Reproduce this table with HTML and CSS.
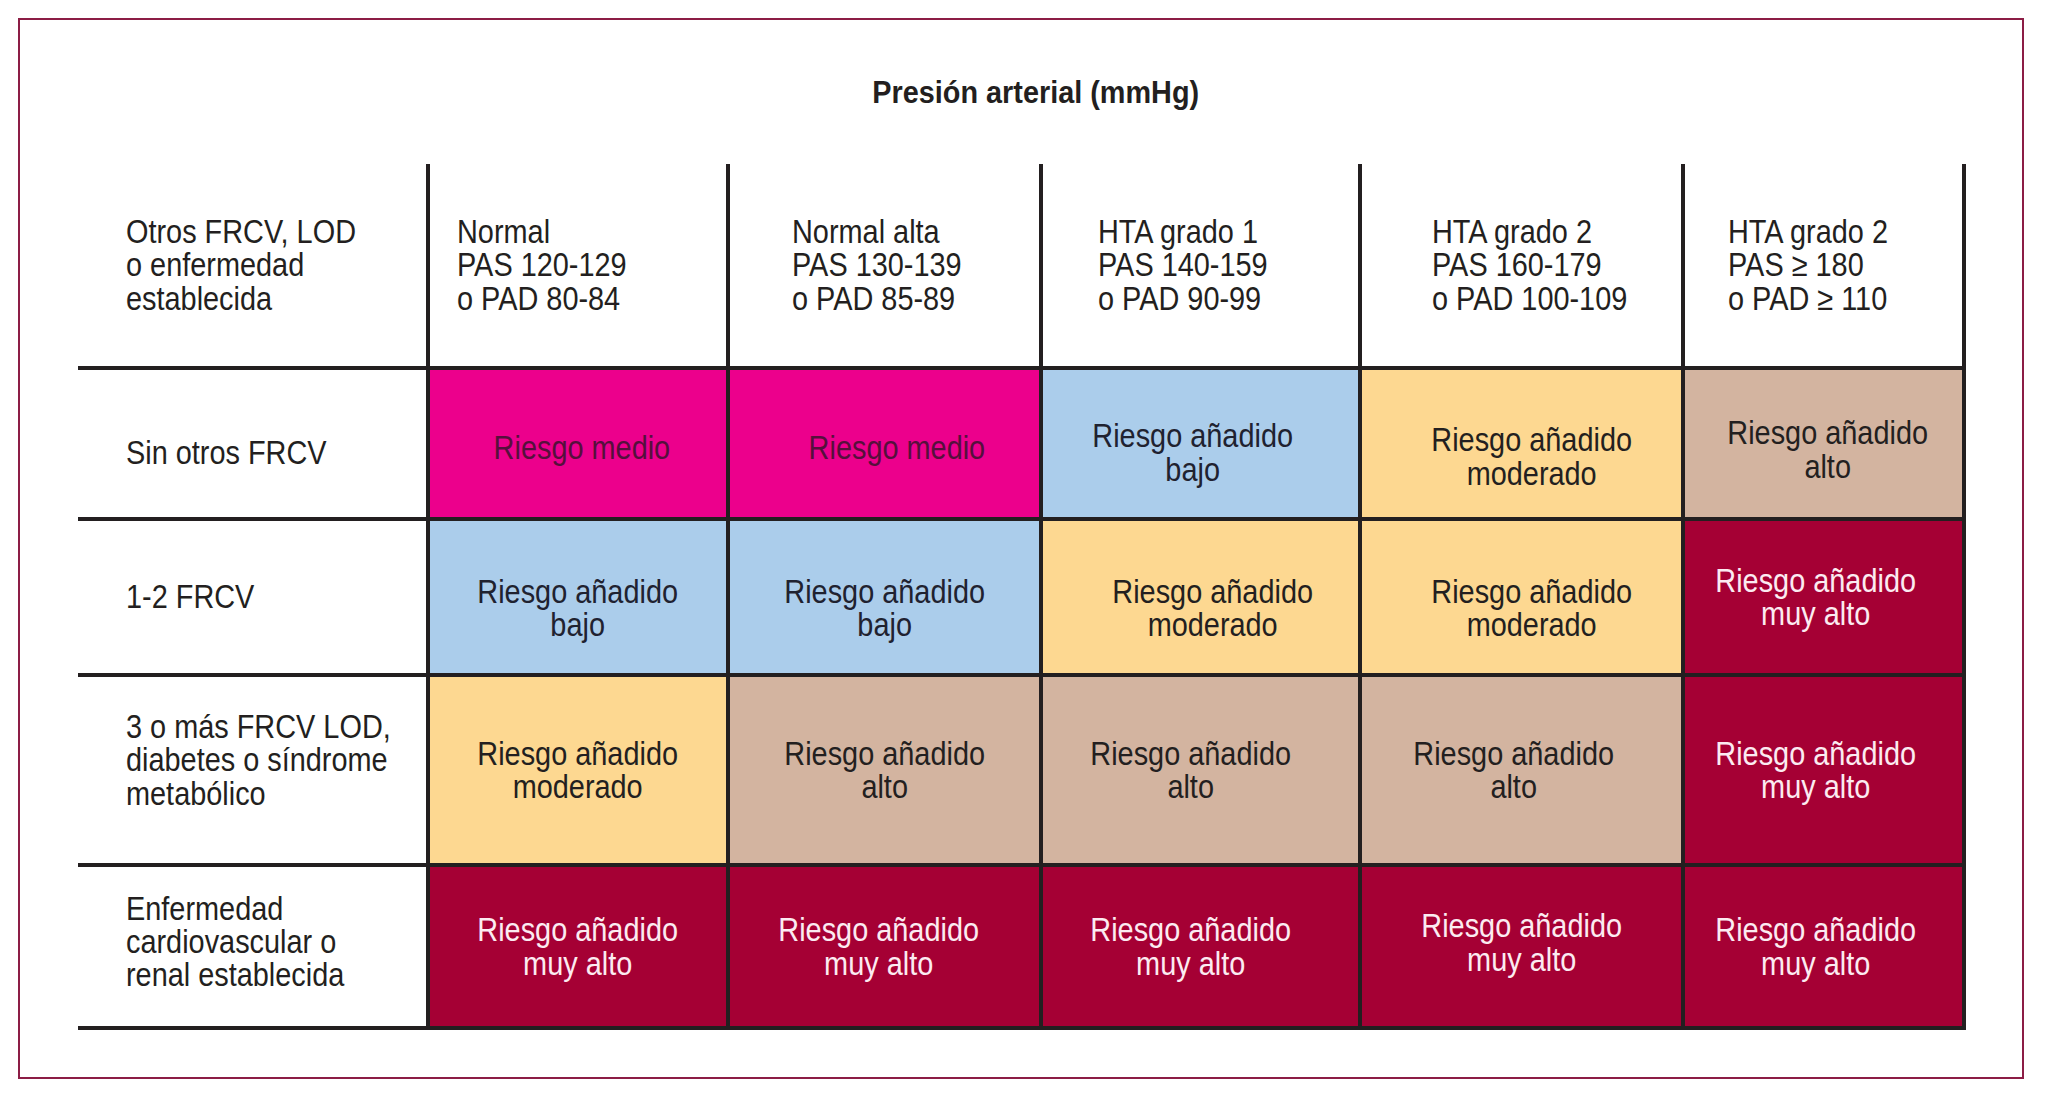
FILE: index.html
```html
<!DOCTYPE html>
<html lang="es">
<head>
<meta charset="utf-8">
<title>Presión arterial (mmHg)</title>
<link rel="stylesheet" href="styles.css">
</head>
<body>
<div class="frame">
  <h1 class="title"><span class="tt">Presión arterial (mmHg)</span></h1>
  <div class="grid">
    <div class="lbl hd"><span class="t">Otros FRCV, LOD<br>o enfermedad<br>establecida</span></div>
    <div class="hcell h1"><span class="t">Normal<br>PAS 120-129<br>o PAD 80-84</span></div>
    <div class="hcell h2"><span class="t">Normal alta<br>PAS 130-139<br>o PAD 85-89</span></div>
    <div class="hcell h3"><span class="t">HTA grado 1<br>PAS 140-159<br>o PAD 90-99</span></div>
    <div class="hcell h4"><span class="t">HTA grado 2<br>PAS 160-179<br>o PAD 100-109</span></div>
    <div class="hcell h5 last"><span class="t">HTA grado 2<br>PAS ≥ 180<br>o PAD ≥ 110</span></div>

    <div class="lbl dy9"><span class="t">Sin otros FRCV</span></div>
    <div class="cell mag dx4 dy4"><span class="t">Riesgo medio</span></div>
    <div class="cell mag dx12 dy4"><span class="t">Riesgo medio</span></div>
    <div class="cell blue lx8 dy9"><span class="t">Riesgo añadido<br>bajo</span></div>
    <div class="cell yel dx10 dy13"><span class="t">Riesgo añadido<br>moderado</span></div>
    <div class="cell tan dx4 dy6 last"><span class="t">Riesgo añadido<br>alto</span></div>

    <div class="lbl"><span class="t">1-2 FRCV</span></div>
    <div class="cell blue dy11"><span class="t">Riesgo añadido<br>bajo</span></div>
    <div class="cell blue dy11"><span class="t">Riesgo añadido<br>bajo</span></div>
    <div class="cell yel dx12 dy11"><span class="t">Riesgo añadido<br>moderado</span></div>
    <div class="cell yel dx10 dy11"><span class="t">Riesgo añadido<br>moderado</span></div>
    <div class="cell red lx8 last"><span class="t">Riesgo añadido<br>muy alto</span></div>

    <div class="lbl uy10"><span class="t">3 o más FRCV LOD,<br>diabetes o síndrome<br>metabólico</span></div>
    <div class="cell yel"><span class="t">Riesgo añadido<br>moderado</span></div>
    <div class="cell tan"><span class="t">Riesgo añadido<br>alto</span></div>
    <div class="cell tan lx10"><span class="t">Riesgo añadido<br>alto</span></div>
    <div class="cell tan lx8"><span class="t">Riesgo añadido<br>alto</span></div>
    <div class="cell red lx8 last"><span class="t">Riesgo añadido<br>muy alto</span></div>

    <div class="lbl uy5"><span class="t">Enfermedad<br>cardiovascular o<br>renal establecida</span></div>
    <div class="cell red"><span class="t">Riesgo añadido<br>muy alto</span></div>
    <div class="cell red lx6"><span class="t">Riesgo añadido<br>muy alto</span></div>
    <div class="cell red lx10"><span class="t">Riesgo añadido<br>muy alto</span></div>
    <div class="cell red uy4"><span class="t">Riesgo añadido<br>muy alto</span></div>
    <div class="cell red lx8 last"><span class="t">Riesgo añadido<br>muy alto</span></div>
  </div>
</div>
</body>
</html>
```

FILE: styles.css
```css
* { box-sizing: border-box; }

html, body {
  margin: 0;
  padding: 0;
  background: #ffffff;
}

body {
  padding: 18px 0 0 18px;
  font-family: "Liberation Sans", Arial, sans-serif;
  color: #231f20;
}

.frame {
  width: 2006px;
  height: 1061px;
  border: 2px solid #8c1d45;
  padding: 55px 0 0 58px;
}

.title {
  margin: 0;
  width: 1888px;
  padding-left: 28px;
  text-align: center;
  font-weight: bold;
  font-size: 31px;
  line-height: 35px;
  color: #231f20;
}

.tt {
  display: inline-block;
  white-space: nowrap;
  transform: scaleX(0.93);
  transform-origin: center center;
}

.grid {
  margin-top: 54px;
  display: grid;
  grid-template-columns: 348px 300px 313px 319px 323px 285px;
  grid-template-rows: 206px 151px 156px 190px 163px;
  font-size: 33px;
  line-height: 33.3px;
}

.grid > div {
  border-bottom: 4px solid #231f20;
  display: flex;
  align-items: center;
}

/* condensed face: the printed table uses a narrow grotesque */
.t {
  display: inline-block;
  white-space: nowrap;
  transform: scaleX(0.875);
  transform-origin: left center;
}

.lbl {
  padding-left: 48px;
  text-align: left;
}

.hcell {
  border-left: 4px solid #231f20;
  text-align: left;
}

.h1 { padding-left: 27px; }
.h2 { padding-left: 62px; }
.h3 { padding-left: 55px; }
.h4 { padding-left: 70px; }
.h5 { padding-left: 43px; }

.cell {
  border-left: 4px solid #231f20;
  justify-content: center;
  text-align: center;
}

.cell .t { transform-origin: center center; }

.grid > .last { border-right: 4px solid #231f20; }

.mag  { background: #ec008c; color: #55103c; }
.blue { background: #abcdeb; color: #1f2230; }
.yel  { background: #fdd891; color: #231f20; }
.tan  { background: #d3b4a0; color: #231f20; }
.red  { background: #a50034; color: #fcebf1; }

/* small optical nudges to match the printed table */
.dy4  { padding-top: 8px; }
.dy6  { padding-top: 12px; }
.dy9  { padding-top: 18px; }
.dy11 { padding-top: 22px; }
.dy13 { padding-top: 26px; }
.uy4  { padding-bottom: 8px; }
.uy5  { padding-bottom: 10px; }
.uy10 { padding-bottom: 20px; }
.dx4  { padding-left: 8px; }
.dx10 { padding-left: 20px; }
.dx12 { padding-left: 24px; }
.lx6  { padding-right: 12px; }
.lx8  { padding-right: 16px; }
.lx10 { padding-right: 20px; }

.lbl.dy9  { padding-top: 18px; }
.lbl.uy10 { padding-bottom: 20px; }
.lbl.uy5  { padding-bottom: 10px; }
```
